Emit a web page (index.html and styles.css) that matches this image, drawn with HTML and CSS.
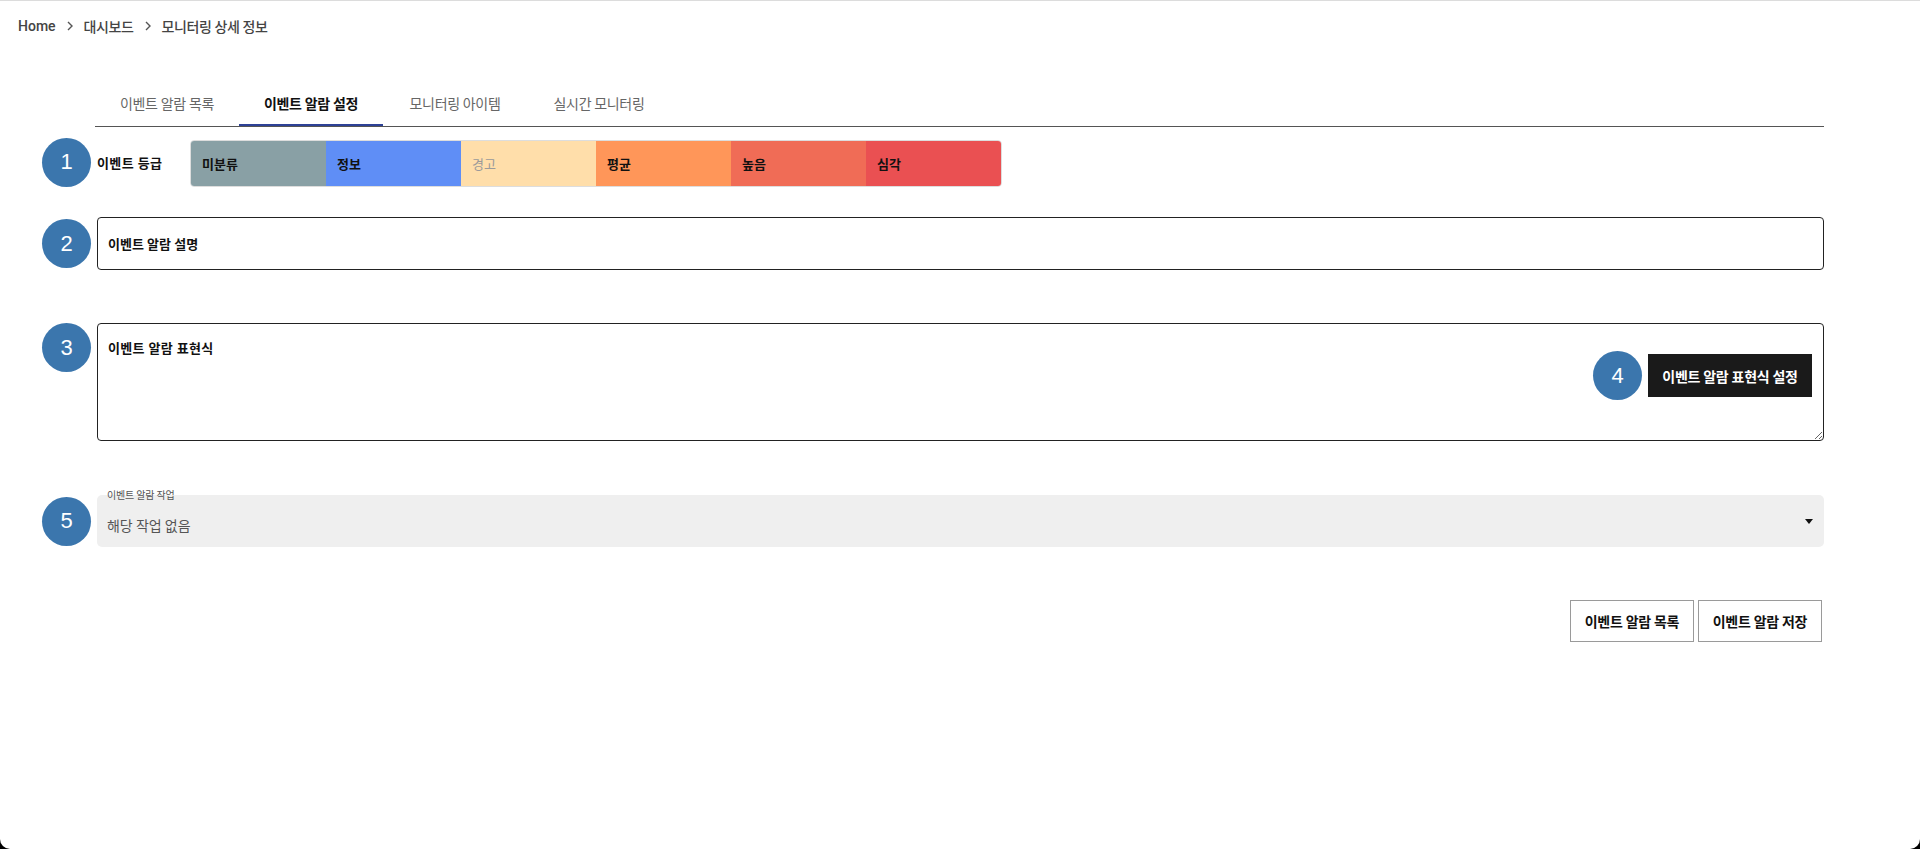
FILE: index.html
```html
<!DOCTYPE html>
<html lang="ko">
<head>
    <title>모니터링 상세 정보</title>
    <meta charset="UTF-8">
    <meta name="viewport" content="width=device-width, initial-scale=1.0">
    <link rel="stylesheet" href="styles.css">
</head>
<body>
    <div class="page">
        <!-- Ruta de navegación -->
        <nav class="breadcrumb">
            <span class="crumb crumb-home">Home</span>
            <svg class="crumb-sep" width="6" height="10" viewBox="0 0 6 10"><path d="M1 1l4 4-4 4" fill="none" stroke="#555" stroke-width="1.4"/></svg>
            <span class="crumb">대시보드</span>
            <svg class="crumb-sep" width="6" height="10" viewBox="0 0 6 10"><path d="M1 1l4 4-4 4" fill="none" stroke="#555" stroke-width="1.4"/></svg>
            <span class="crumb">모니터링 상세 정보</span>
        </nav>

        <main class="detail">
            <div class="tabs">
                <span class="tab">이벤트 알람 목록</span>
                <span class="tab tab-active">이벤트 알람 설정</span>
                <span class="tab">모니터링 아이템</span>
                <span class="tab">실시간 모니터링</span>
            </div>

            <!-- 1. Nivel del evento -->
            <div class="row row-center row-grade">
                <span class="marker">1</span>
                <span class="grade-label">이벤트 등급</span>
                <div class="grade-bar">
                    <span class="grade grade-none">미분류</span>
                    <span class="grade grade-info">정보</span>
                    <span class="grade grade-warn">경고</span>
                    <span class="grade grade-avg">평균</span>
                    <span class="grade grade-high">높음</span>
                    <span class="grade grade-crit">심각</span>
                </div>
            </div>

            <!-- 2. Descripción -->
            <div class="row row-center row-desc">
                <span class="marker">2</span>
                <input class="text-field" type="text" name="descripcion" value="이벤트 알람 설명">
            </div>

            <!-- 3. Expresión -->
            <div class="row row-expr">
                <span class="marker">3</span>
                <div class="expr-field">
                    <textarea class="expr-input" name="expresion">이벤트 알람 표현식</textarea>
                    <div class="expr-actions">
                        <span class="marker">4</span>
                        <button class="btn-dark" type="button">이벤트 알람 표현식 설정</button>
                    </div>
                </div>
            </div>

            <!-- 5. Acción -->
            <div class="row row-center row-action">
                <span class="marker">5</span>
                <div class="select-field">
                    <span class="select-label">이벤트 알람 작업</span>
                    <span class="select-value">해당 작업 없음</span>
                    <svg class="select-arrow" width="8" height="5" viewBox="0 0 8 5"><path d="M0 0h8L4 5z" fill="#111"/></svg>
                </div>
            </div>

            <div class="actions">
                <button class="btn-outline" type="button">이벤트 알람 목록</button>
                <button class="btn-outline" type="button">이벤트 알람 저장</button>
            </div>
        </main>
    </div>
</body>
</html>
```

FILE: styles.css
```css
html, body {
    margin: 0;
    padding: 0;
    background-color: #000;
}

body {
    font-family: Roboto, "Noto Sans CJK KR", sans-serif;
    color: #111;
}

.page {
    height: 849px;
    box-sizing: border-box;
    background-color: #fff;
    border-top: 1px solid #dcdcdc;
    border-radius: 0 0 10px 10px;
    overflow: hidden;
}

/* Ruta de navegación */
.breadcrumb {
    display: flex;
    align-items: center;
    gap: 11px;
    padding: 15px 18px 0;
    height: 20px;
    font-size: 14px;
    font-weight: 500;
    color: #444;
}

.crumb {
    letter-spacing: -0.4px;
}

.crumb-home {
    letter-spacing: 0;
}

.detail {
    padding: 44px 96px 0 42px;
}

/* Pestañas */
.tabs {
    display: flex;
    margin-left: 53px;
    border-bottom: 1px solid #555;
}

.tab {
    width: 144px;
    height: 46px;
    display: flex;
    align-items: center;
    justify-content: center;
    box-sizing: border-box;
    font-size: 14px;
    letter-spacing: -0.35px;
    color: #666;
}

.tab-active {
    color: #111;
    font-weight: 700;
    border-bottom: 2px solid #2e4296;
    padding-top: 2px;
}

/* Filas numeradas */
.row {
    display: flex;
    gap: 6px;
}

.row-center {
    align-items: center;
}

.marker {
    flex: none;
    width: 49px;
    height: 49px;
    border-radius: 50%;
    background-color: #3b76ad;
    color: #fff;
    font-family: "Liberation Sans", Arial, sans-serif;
    font-size: 22px;
    display: flex;
    align-items: center;
    justify-content: center;
}

.row-grade {
    margin-top: 10px;
}

.grade-label {
    width: 87px;
    font-size: 13px;
    font-weight: 600;
    letter-spacing: 0.4px;
}

.grade-bar {
    display: flex;
    height: 45px;
    margin-top: 3px;
    border: 1px solid #ddd;
    border-radius: 4px;
    overflow: hidden;
}

.grade {
    width: 135px;
    display: flex;
    align-items: center;
    padding-left: 11px;
    box-sizing: border-box;
    font-size: 13px;
    font-weight: 600;
    letter-spacing: 0;
    color: #111;
}

.grade-none { background-color: #89a0a5; }
.grade-info { background-color: #5f8ef6; }
.grade-warn { background-color: #ffdeaa; color: #9a9a9a; font-weight: 400; }
.grade-avg { background-color: #ff9659; }
.grade-high { background-color: #f06c56; }
.grade-crit { background-color: #ea5052; }

.row-desc {
    margin-top: 30px;
}

.text-field {
    flex: 1;
    height: 53px;
    box-sizing: border-box;
    border: 1px solid #222;
    border-radius: 4px;
    padding: 0 10px;
    font-family: inherit;
    font-size: 13px;
    font-weight: 600;
    letter-spacing: 0;
    color: #111;
    outline: none;
}

/* Campo de expresión */
.row-expr {
    margin-top: 53px;
}

.expr-field {
    flex: 1;
    position: relative;
    display: flex;
}

.expr-input {
    flex: 1;
    height: 118px;
    box-sizing: border-box;
    border: 1px solid #222;
    border-radius: 4px;
    padding: 14px 10px;
    resize: vertical;
    font-family: inherit;
    font-size: 13px;
    font-weight: 600;
    letter-spacing: 0.35px;
    color: #111;
    outline: none;
}

.expr-actions {
    position: absolute;
    top: 28px;
    right: 12px;
    display: flex;
    align-items: center;
    gap: 6px;
}

.btn-dark {
    width: 164px;
    height: 43px;
    border: none;
    background-color: #1a1a1a;
    color: #fff;
    font-family: inherit;
    font-size: 14px;
    font-weight: 700;
    letter-spacing: -0.3px;
    cursor: pointer;
}

/* Selector de acción */
.row-action {
    margin-top: 54px;
}

.select-field {
    flex: 1;
    position: relative;
    height: 52px;
    box-sizing: border-box;
    background-color: #efefef;
    border-radius: 5px;
    display: flex;
    align-items: center;
    justify-content: space-between;
    padding: 8px 11px 0 10px;
}

.select-label {
    position: absolute;
    top: -8px;
    left: 10px;
    font-size: 10px;
    letter-spacing: -0.2px;
    color: #555;
}

.select-value {
    font-size: 14px;
    letter-spacing: -0.1px;
    color: #555;
}

.select-arrow {
    margin-top: -8px;
}

/* Botones inferiores */
.actions {
    display: flex;
    justify-content: flex-end;
    gap: 4px;
    margin-top: 53px;
    margin-right: 2px;
}

.btn-outline {
    width: 124px;
    height: 42px;
    background-color: #fff;
    border: 1px solid #9a9a9a;
    font-family: inherit;
    font-size: 14px;
    font-weight: 600;
    letter-spacing: -0.3px;
    color: #111;
    cursor: pointer;
}
```
